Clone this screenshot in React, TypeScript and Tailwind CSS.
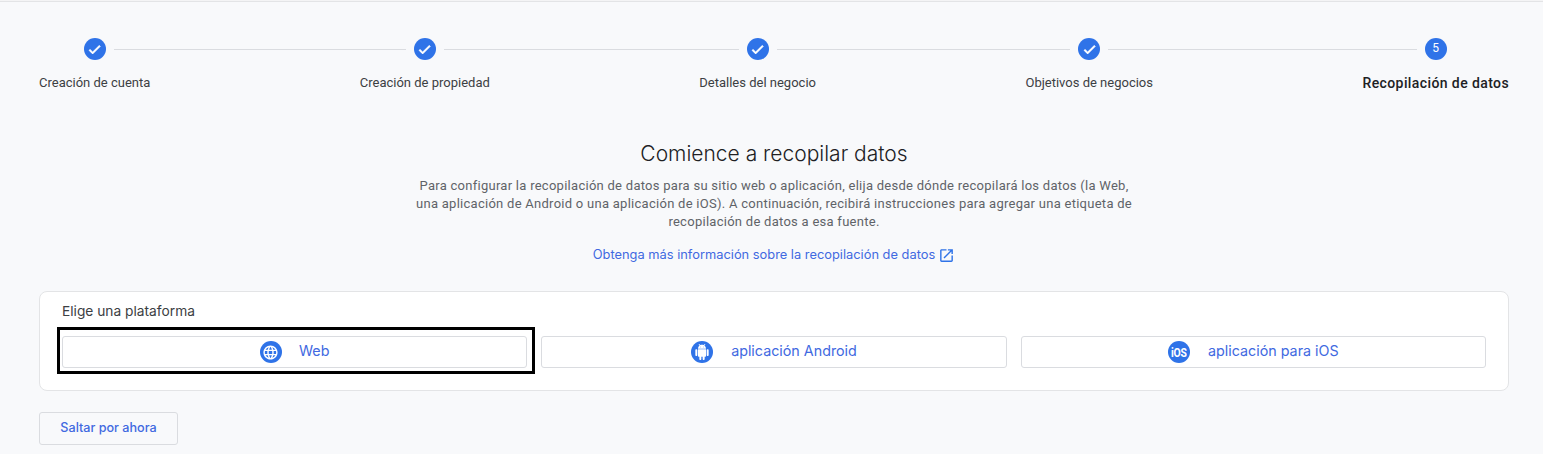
import { Fragment } from "react";

const CheckIcon = () => (
  <svg viewBox="0 0 24 24" className="h-[15px] w-[15px] fill-white stroke-white stroke-[1.5]">
    <path d="M9 16.17L4.83 12l-1.41 1.41L9 19 21 7l-1.41-1.41z" />
  </svg>
);

const GlobeIcon = () => (
  <svg viewBox="0 0 24 24" className="h-[17px] w-[17px] fill-white">
    <path d="M11.99 2C6.47 2 2 6.48 2 12s4.47 10 9.99 10C17.52 22 22 17.52 22 12S17.52 2 11.99 2zm6.93 6h-2.95c-.32-1.25-.78-2.45-1.38-3.56 1.84.63 3.37 1.91 4.33 3.56zM12 4.04c.83 1.2 1.48 2.53 1.91 3.96h-3.82c.43-1.43 1.08-2.76 1.91-3.96zM4.26 14C4.1 13.36 4 12.69 4 12s.1-1.36.26-2h3.38c-.08.66-.14 1.32-.14 2 0 .68.06 1.34.14 2H4.26zm.82 2h2.95c.32 1.25.78 2.45 1.38 3.56-1.84-.63-3.37-1.9-4.33-3.56zm2.95-8H5.08c.96-1.66 2.49-2.93 4.33-3.56C8.81 5.55 8.35 6.75 8.03 8zM12 19.96c-.83-1.2-1.48-2.53-1.91-3.96h3.82c-.43 1.43-1.08 2.76-1.91 3.96zM14.34 14H9.66c-.09-.66-.16-1.32-.16-2 0-.68.07-1.35.16-2h4.68c.09.65.16 1.32.16 2 0 .68-.07 1.34-.16 2zm.25 5.56c.6-1.11 1.06-2.31 1.38-3.56h2.95c-.96 1.65-2.49 2.93-4.33 3.56zM16.36 14c.08-.66.14-1.32.14-2 0-.68-.06-1.34-.14-2h3.38c.16.64.26 1.31.26 2s-.1 1.36-.26 2h-3.38z" />
  </svg>
);

const AndroidIcon = () => (
  <svg viewBox="0 0 24 24" className="h-[16px] w-[16px] fill-white">
    <path d="M6 18c0 .55.45 1 1 1h1v3.5c0 .83.67 1.5 1.5 1.5s1.5-.67 1.5-1.5V19h2v3.5c0 .83.67 1.5 1.5 1.5s1.5-.67 1.5-1.5V19h1c.55 0 1-.45 1-1V8H6v10zM3.5 8C2.67 8 2 8.67 2 9.5v7c0 .83.67 1.5 1.5 1.5S5 17.33 5 16.5v-7C5 8.67 4.33 8 3.5 8zm17 0c-.83 0-1.5.67-1.5 1.5v7c0 .83.67 1.5 1.5 1.5s1.5-.67 1.5-1.5v-7c0-.83-.67-1.5-1.5-1.5zm-4.97-5.84l1.3-1.3c.2-.2.2-.51 0-.71-.2-.2-.51-.2-.71 0l-1.48 1.48C13.85 1.23 12.95 1 12 1c-.96 0-1.86.23-2.66.63L7.85.15c-.2-.2-.51-.2-.71 0-.2.2-.2.51 0 .71l1.31 1.31C6.97 3.26 6 5.01 6 7h12c0-1.99-.97-3.75-2.47-4.84zM10 5H9V4h1v1zm5 0h-1V4h1v1z" />
  </svg>
);

const steps = [
  { label: "Creación de cuenta" },
  { label: "Creación de propiedad" },
  { label: "Detalles del negocio" },
  { label: "Objetivos de negocios" },
  { label: "Recopilación de datos", current: true },
];

const Step = (props: { label: string; current?: boolean; first: boolean; last: boolean }) => {
  return (
    <div className="flex shrink-0 flex-col items-center">
      <div className="flex h-[22px] w-full items-center gap-2">
        <div className={`h-px flex-1 ${props.first ? "" : "bg-[#dadce0]"}`}></div>
        <div className="flex h-[22px] w-[22px] items-center justify-center rounded-full bg-[#2f73e8] text-[12px] leading-none text-white">
          {props.current ? <span className="-mt-[2px]">5</span> : <CheckIcon />}
        </div>
        <div className={`h-px flex-1 ${props.last ? "" : "bg-[#dadce0]"}`}></div>
      </div>
      {props.current ? (
        <div className="mt-[13px] text-[14px] font-medium leading-[20px] tracking-[0.4px] text-[#202124]">
          {props.label}
        </div>
      ) : (
        <div className="mt-[13px] text-[13px] leading-[20px] text-[#3c4043]">
          {props.label}
        </div>
      )}
    </div>
  );
};

const PlatformButton = (props: { label: string; icon: React.ReactNode; gap: string }) => {
  return (
    <button
      className={`flex h-[32px] w-full items-center justify-center rounded-[3px] border border-[#dadce0] bg-white text-[14.3px] text-[#4169e1] ${props.gap}`}
    >
      <span className="flex h-[22px] w-[22px] items-center justify-center rounded-full bg-[#2f73e8] text-white">
        {props.icon}
      </span>
      <span className="-mt-[2px]">{props.label}</span>
    </button>
  );
};

export default function App() {
  return (
    <div className="min-h-screen bg-[#f8f9fb] font-['Roboto',sans-serif]">
      <div className="h-px bg-[#f4f4f5]"></div>
      <div className="h-px bg-[#e3e4e6]"></div>
      <div className="pl-[39px] pr-[34px] pt-[36px]">
        <div className="flex">
          {steps.map((step, i) => (
            <Fragment key={step.label}>
              <Step label={step.label} current={step.current} first={i === 0} last={i === 4} />
              {i < 4 && <div className="mt-[10.5px] h-px flex-1 bg-[#dadce0]"></div>}
            </Fragment>
          ))}
        </div>

        <div className="mt-[45px] flex flex-col items-center">
          <h1 className="font-['Inter',sans-serif] text-[21px] font-light leading-[32px] text-[#202124]">
            Comience a recopilar datos
          </h1>
          <p className="mt-[7px] w-[725px] text-center text-[13px] leading-[18px] tracking-[0.27px] text-[#5f6368]">
            Para configurar la recopilación de datos para su sitio web o aplicación, elija desde dónde
            recopilará los datos (la Web, una aplicación de Android o una aplicación de iOS). A
            continuación, recibirá instrucciones para agregar una etiqueta de recopilación de datos a
            esa fuente.
          </p>
          <a className="mt-[14px] flex items-center gap-[3px] font-['Inter',sans-serif] text-[12.85px] leading-[20px] text-[#4169e1]">
            Obtenga más información sobre la recopilación de datos
            <svg viewBox="0 0 24 24" className="h-[17px] w-[17px] fill-[#2f73e8]">
              <path d="M19 19H5V5h7V3H5c-1.11 0-2 .9-2 2v14c0 1.1.89 2 2 2h14c1.1 0 2-.9 2-2v-7h-2v7zM14 3v2h3.59l-9.83 9.83 1.41 1.41L19 6.41V10h2V3h-7z" />
            </svg>
          </a>
        </div>

        <div className="mt-[26px] rounded-[8px] border border-[#e3e4e6] bg-white px-[22px] pb-[22px] pt-[9px] font-['Inter',sans-serif]">
          <div className="text-[13.75px] leading-[20px] text-[#3c4043]">Elige una plataforma</div>
          <div className="mt-[15px] grid grid-cols-3 gap-[14px]">
            <div className="relative">
              <PlatformButton label="Web" gap="gap-[17px]" icon={<GlobeIcon />} />
              <div className="pointer-events-none absolute -bottom-[6px] -left-[5px] -right-[8px] -top-[9px] border-[3px] border-black"></div>
            </div>
            <PlatformButton label="aplicación Android" gap="gap-[18px]" icon={<AndroidIcon />} />
            <PlatformButton
              label="aplicación para iOS"
              gap="gap-[18px]"
              icon={
                <span className="scale-x-[0.8] font-['Roboto',sans-serif] text-[13px] font-bold leading-none tracking-[-0.3px]">
                  iOS
                </span>
              }
            />
          </div>
        </div>

        <button className="mt-[21px] flex h-[33px] w-[139px] items-center justify-center rounded-[3px] border border-[#dadce0] font-['Inter',sans-serif] text-[12.6px] font-medium text-[#4169e1]">
          Saltar por ahora
        </button>
      </div>
    </div>
  );
}
